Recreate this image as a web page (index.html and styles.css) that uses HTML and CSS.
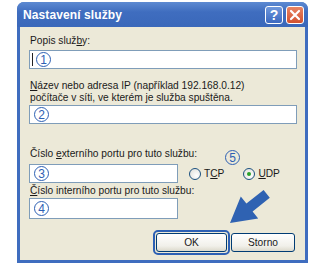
FILE: index.html
```html
<!DOCTYPE html>
<html lang="cs">
<head>
    <meta charset="UTF-8">
    <title>Nastavení služby</title>
    <link rel="stylesheet" href="styles.css">
</head>
<body>
    <div class="window">
        <div class="titlebar">
            <span class="title">Nastavení služby</span>
            <div class="title-buttons">
                <span class="tbtn help">?</span>
                <span class="tbtn close">
                    <svg width="12" height="12" viewBox="0 0 12 12"><path d="M2 2 L10 10 M10 2 L2 10" stroke="#fff" stroke-width="2.2" stroke-linecap="round"/></svg>
                </span>
            </div>
        </div>

        <div class="dialog">
            <div class="label l1">Popis služ<u>b</u>y:</div>
            <div class="field wide f1"><span class="caret"></span><span class="num">1</span></div>

            <div class="label l2"><u>N</u>ázev nebo adresa IP (například 192.168.0.12)<br>počítače v síti, ve kterém je služba spuštěna.</div>
            <div class="field wide f2"><span class="num">2</span></div>

            <div class="label l3">Číslo <u>e</u>xterního portu pro tuto službu:</div>
            <div class="row">
                <div class="field short"><span class="num">3</span></div>
                <label class="radio"><span class="dot"></span><span>T<u>C</u>P</span></label>
                <label class="radio checked"><span class="dot"></span><span><u>U</u>DP</span></label>
            </div>

            <div class="label l4"><u>Č</u>íslo interního portu pro tuto službu:</div>
            <div class="field short f4"><span class="num">4</span></div>

            <div class="buttons">
                <span class="focus"><span class="btn">OK</span></span>
                <span class="btn">Storno</span>
            </div>
        </div>
    </div>

    <!-- popisky k obrázku -->
    <span class="num marker">5</span>
    <svg class="arrow" width="319" height="264" viewBox="0 0 319 264">
        <polygon points="230,223 240.8,196.6 246.4,203.6 263.6,190 269.8,197.8 252.6,211.4 258.2,218.4" fill="#2f62b2"/>
    </svg>
</body>
</html>
```

FILE: styles.css
```css
* {
    margin: 0;
    padding: 0;
    box-sizing: border-box;
}

body {
    background: #fff;
    font-family: 'Liberation Sans', Arial, sans-serif;
    font-size: 10.2px;
    color: #1a1a1a;
    width: 319px;
    height: 264px;
    position: relative;
    overflow: hidden;
}

.window {
    margin: 2px 0 0 17px;
    width: 291px;
    height: 261px;
    background: #3f6dbf;
    border-radius: 7px 7px 0 0;
    padding: 0 3px 3px;
    display: flex;
    flex-direction: column;
}

.titlebar {
    height: 25px;
    display: flex;
    align-items: center;
    justify-content: space-between;
    background: linear-gradient(#5d8ad2, #3f6dbf 40%, #3a68ba);
    border-radius: 7px 7px 0 0;
    margin: 0 -3px;
    padding-left: 6px;
    padding-right: 4px;
}

.title {
    color: #fff;
    font-weight: bold;
    font-size: 12px;
    letter-spacing: 0.1px;
}

.title-buttons {
    display: flex;
    gap: 3px;
}

.tbtn {
    width: 18px;
    height: 18px;
    border: 1px solid #fff;
    border-radius: 3px;
    display: flex;
    align-items: center;
    justify-content: center;
    color: #fff;
    font-weight: bold;
    font-size: 14px;
}

.help {
    background: linear-gradient(#6f98dc, #3c69c0);
}

.close {
    background: linear-gradient(#e88463, #d2512f);
}

.dialog {
    flex: 1;
    background: #ece9d8;
    padding: 8px 8px 0 9px;
}

.label {
    line-height: 12px;
    padding-left: 1px;
}

.label.l2 {
    margin-top: 11px;
}

.label.l3 {
    margin-top: 24px;
}

.label.l4 {
    margin-top: 2px;
}

.field {
    height: 19px;
    background: #fff;
    border: 1px solid #7f9db9;
    display: flex;
    align-items: center;
    padding-left: 4px;
}

.field.f1 {
    margin-top: 3px;
    padding-left: 2px;
}

.field.f2 {
    margin-top: 1px;
}

.field.short {
    width: 149px;
}

.field.f4 {
    margin-top: 1px;
    height: 21px;
}

.caret {
    width: 1px;
    height: 13px;
    background: #222;
    margin-right: 3px;
}

.num {
    width: 15px;
    height: 15px;
    border: 1.3px solid #2d60b4;
    border-radius: 50%;
    color: #2d60b4;
    font-size: 12px;
    line-height: 12px;
    display: flex;
    align-items: center;
    justify-content: center;
}

.row {
    display: flex;
    align-items: center;
    margin-top: 4px;
}

.radio {
    display: flex;
    align-items: center;
    gap: 3px;
    margin-left: 11px;
}

.radio + .radio {
    margin-left: 19px;
}

.dot {
    width: 12px;
    height: 12px;
    border: 1px solid #1c5180;
    border-radius: 50%;
    background: radial-gradient(circle at 65% 65%, #fff, #dcdcd6);
    position: relative;
}

.radio.checked .dot::after {
    content: "";
    position: absolute;
    left: 3px;
    top: 3px;
    width: 4px;
    height: 4px;
    border-radius: 50%;
    background: #2aa12a;
}

.buttons {
    display: flex;
    justify-content: flex-end;
    align-items: center;
    gap: 1px;
    margin-top: 11px;
    padding-right: 2px;
}

.focus {
    border: 2px solid #2d60b4;
    border-radius: 5px;
    padding: 1px;
}

.btn {
    display: flex;
    align-items: center;
    justify-content: center;
    width: 71px;
    height: 19px;
    border: 1px solid #003c74;
    border-radius: 3px;
    background: linear-gradient(#fff, #f1f0ea 70%, #dcd9cc);
    font-size: 10.2px;
}

.buttons > .btn {
    width: 64px;
}

.marker {
    position: absolute;
    left: 225px;
    top: 150px;
}

.arrow {
    position: absolute;
    left: 0;
    top: 0;
}
```
